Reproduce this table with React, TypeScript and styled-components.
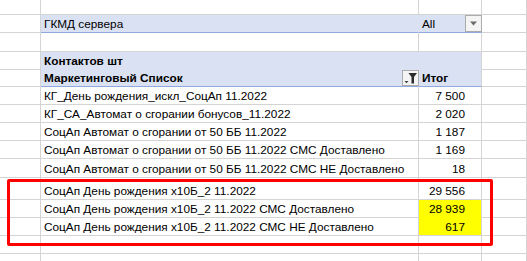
import styled, { createGlobalStyle } from "styled-components";

const GlobalStyle = createGlobalStyle`
  html, body {
    margin: 0;
    padding: 0;
    background: #ffffff;
    overflow: hidden;
  }
  body {
    font-family: "Liberation Sans", Arial, sans-serif;
    font-size: 11.8px;
    color: #000000;
  }
`;

const GRID = "#D4D4D4";
const ACCENT = "#8EA9DB";

type Fill = "none" | "blue" | "yellow";

const fills: Record<Fill, string> = {
  none: "#ffffff",
  blue: "#D9E1F2",
  yellow: "#FFFF00",
};

const rows = [
  { name: "КГ_День рождения_искл_СоцАп 11.2022", total: "7 500" },
  { name: "КГ_СА_Автомат о сгорании бонусов_11.2022", total: "2 020" },
  { name: "СоцАп Автомат о сгорании от 50 ББ 11.2022", total: "1 187" },
  { name: "СоцАп Автомат о сгорании от 50 ББ 11.2022 СМС Доставлено", total: "1 169" },
  { name: "СоцАп Автомат о сгорании от 50 ББ 11.2022 СМС НЕ Доставлено", total: "18" },
];

const marked = [
  { name: "СоцАп День рождения х10Б_2 11.2022", total: "29 556", fill: "none" as Fill, h: 22 },
  { name: "СоцАп День рождения х10Б_2 11.2022 СМС Доставлено", total: "28 939", fill: "yellow" as Fill, h: 18 },
  { name: "СоцАп День рождения х10Б_2 11.2022 СМС НЕ Доставлено", total: "617", fill: "yellow" as Fill, h: 18 },
];

export default function App() {
  return (
    <>
      <GlobalStyle />
      <Sheet>
        <Row $h={15}>
          <Cell />
          <Cell />
          <Cell />
          <Cell />
        </Row>

        <Row $h={18}>
          <Cell />
          <Cell $fill="blue" $rightLine={fills.blue} $bottom={ACCENT}>
            ГКМД сервера
          </Cell>
          <Cell $fill="blue" $bottom={ACCENT} $spread>
            <span>All</span>
            <DropButton>
              <svg width="9" height="5" viewBox="0 0 9 5">
                <path d="M1 0.5 H8 L4.5 4.5 Z" fill="#6b6b6b" />
              </svg>
            </DropButton>
          </Cell>
          <Cell />
        </Row>

        <Row $h={19}>
          <Cell />
          <Cell />
          <Cell />
          <Cell />
        </Row>

        <Row $h={18}>
          <Cell />
          <Cell $fill="blue" $rightLine={fills.blue} $bottom={fills.blue} $bold>
            Контактов шт
          </Cell>
          <Cell $fill="blue" $bottom={fills.blue} />
          <Cell />
        </Row>

        <Row $h={17}>
          <Cell />
          <Cell $fill="blue" $rightLine={fills.blue} $bottom={ACCENT} $bold $spread>
            <span>Маркетинговый Список</span>
            <FilterButton>
              <svg width="15" height="14" viewBox="0 0 15 14">
                <path d="M1.5 10 H5.5 L3.5 12.2 Z" fill="#404040" />
                <path d="M5.5 2 H14 L11 6 V12.5 H8.5 V6 Z" fill="#2b2b2b" />
              </svg>
            </FilterButton>
          </Cell>
          <Cell $fill="blue" $bottom={ACCENT} $bold>
            Итог
          </Cell>
          <Cell />
        </Row>

        {rows.map((r, i) => (
          <Row key={r.name} $h={i === 4 ? 19 : 18}>
            <Cell />
            <Cell>{r.name}</Cell>
            <Cell $align="right">{r.total}</Cell>
            <Cell />
          </Row>
        ))}

        {marked.map((r, i) => (
          <Row key={r.name} $h={r.h}>
            <Cell />
            <Cell>{r.name}</Cell>
            <Cell
              $align="right"
              $fill={r.fill}
              $bottom={i === 1 ? fills.yellow : GRID}
            >
              {r.total}
            </Cell>
            <Cell />
          </Row>
        ))}

        <Row $h={18}>
          <Cell />
          <Cell />
          <Cell />
          <Cell />
        </Row>
        <Row $h={18}>
          <Cell />
          <Cell />
          <Cell />
          <Cell />
        </Row>

        <Highlight />
      </Sheet>
    </>
  );
}

const Sheet = styled.div`
  position: relative;
  width: 527px;
  height: 261px;
  overflow: hidden;
`;

const Row = styled.div<{ $h: number }>`
  display: grid;
  grid-template-columns: 41px 378px 63px 1fr;
  height: ${(p) => p.$h}px;
`;

const Cell = styled.div<{
  $fill?: Fill;
  $bold?: boolean;
  $align?: "left" | "right";
  $bottom?: string;
  $rightLine?: string;
  $spread?: boolean;
}>`
  box-sizing: border-box;
  display: flex;
  align-items: flex-end;
  justify-content: ${(p) =>
    p.$spread ? "space-between" : p.$align === "right" ? "flex-end" : "flex-start"};
  padding: 0 ${(p) => (p.$align === "right" ? "16px" : p.$spread ? "0" : "3px")} 0 3px;
  background: ${(p) => fills[p.$fill ?? "none"]};
  border-right: 1px solid ${(p) => p.$rightLine ?? GRID};
  border-bottom: 1px solid ${(p) => p.$bottom ?? GRID};
  font-weight: ${(p) => (p.$bold ? 700 : 400)};
  line-height: 16px;
  white-space: nowrap;
`;

const DropButton = styled.div`
  box-sizing: border-box;
  align-self: center;
  width: 17px;
  height: 17px;
  margin-right: -1px;
  display: flex;
  align-items: center;
  justify-content: center;
  background: #f4f4f4;
  border: 1px solid #ababab;
`;

const FilterButton = styled.div`
  box-sizing: border-box;
  align-self: center;
  width: 17px;
  height: 16px;
  margin-right: -1px;
  display: flex;
  align-items: center;
  justify-content: center;
  background: #f4f4f4;
  border: 1px solid #ababab;
`;

const Highlight = styled.div`
  position: absolute;
  left: 7px;
  top: 179px;
  width: 486px;
  height: 67px;
  box-sizing: border-box;
  border: 3px solid #ff0000;
  border-radius: 2px;
  pointer-events: none;
`;
